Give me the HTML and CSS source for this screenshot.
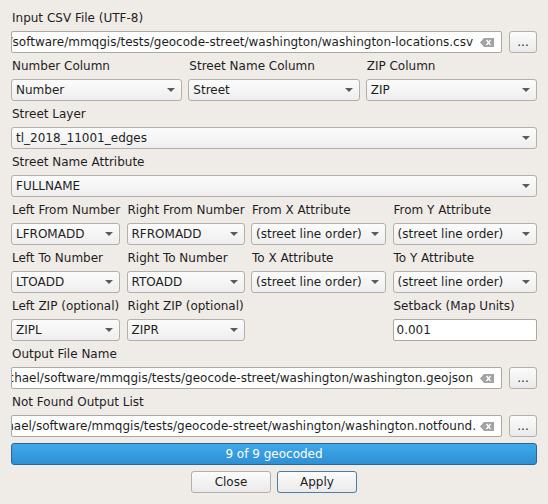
FILE: index.html
```html
<!DOCTYPE html>
<html>
<head>
<meta charset="utf-8">
<link rel="stylesheet" href="styles.css">
</head>
<body>
<div class="dlg">
  <div class="lbl">Input CSV File (UTF-8)</div>
  <div class="filerow">
    <div class="edit file">
      <div class="clip"><span>/home/michael/software/mmqgis/tests/geocode-street/washington/washington-locations.csv</span></div>
      <svg class="clear" width="14" height="9" viewBox="0 0 14 9"><polygon points="0,4.5 4,0 14,0 14,9 4,9" fill="#a3a3a3"/><path d="M6.5 2 L10.5 7 M10.5 2 L6.5 7" stroke="#fff" stroke-width="1.3"/></svg>
    </div>
    <div class="btn dots">...</div>
  </div>

  <div class="grid3">
    <div class="lbl">Number Column</div>
    <div class="lbl">Street Name Column</div>
    <div class="lbl">ZIP Column</div>
    <div class="combo">Number</div>
    <div class="combo">Street</div>
    <div class="combo">ZIP</div>
  </div>

  <div class="lbl">Street Layer</div>
  <div class="combo">tl_2018_11001_edges</div>
  <div class="lbl">Street Name Attribute</div>
  <div class="combo">FULLNAME</div>

  <div class="grid4">
    <div class="lbl">Left From Number</div>
    <div class="lbl">Right From Number</div>
    <div class="lbl">From X Attribute</div>
    <div class="lbl">From Y Attribute</div>
    <div class="combo">LFROMADD</div>
    <div class="combo">RFROMADD</div>
    <div class="combo">(street line order)</div>
    <div class="combo">(street line order)</div>
    <div class="lbl">Left To Number</div>
    <div class="lbl">Right To Number</div>
    <div class="lbl">To X Attribute</div>
    <div class="lbl">To Y Attribute</div>
    <div class="combo">LTOADD</div>
    <div class="combo">RTOADD</div>
    <div class="combo">(street line order)</div>
    <div class="combo">(street line order)</div>
    <div class="lbl">Left ZIP (optional)</div>
    <div class="lbl">Right ZIP (optional)</div>
    <div class="lbl"></div>
    <div class="lbl">Setback (Map Units)</div>
    <div class="combo">ZIPL</div>
    <div class="combo">ZIPR</div>
    <div></div>
    <div class="edit num">0.001</div>
  </div>

  <div class="lbl">Output File Name</div>
  <div class="filerow">
    <div class="edit file">
      <div class="clip"><span>/home/michael/software/mmqgis/tests/geocode-street/washington/washington.geojson</span></div>
      <svg class="clear" width="14" height="9" viewBox="0 0 14 9"><polygon points="0,4.5 4,0 14,0 14,9 4,9" fill="#a3a3a3"/><path d="M6.5 2 L10.5 7 M10.5 2 L6.5 7" stroke="#fff" stroke-width="1.3"/></svg>
    </div>
    <div class="btn dots">...</div>
  </div>

  <div class="lbl">Not Found Output List</div>
  <div class="filerow">
    <div class="edit file">
      <div class="clip tight"><span>/home/michael/software/mmqgis/tests/geocode-street/washington/washington.notfound.</span></div>
      <svg class="clear" width="14" height="9" viewBox="0 0 14 9"><polygon points="0,4.5 4,0 14,0 14,9 4,9" fill="#a3a3a3"/><path d="M6.5 2 L10.5 7 M10.5 2 L6.5 7" stroke="#fff" stroke-width="1.3"/></svg>
    </div>
    <div class="btn dots">...</div>
  </div>

  <div class="progress">9 of 9 geocoded</div>

  <div class="actions">
    <div class="btn act">Close</div>
    <div class="btn act default">Apply</div>
  </div>
</div>
</body>
</html>
```

FILE: styles.css
```css
html, body {
  margin: 0;
  padding: 0;
  background: #efebe7;
}

body {
  font-family: "DejaVu Sans", sans-serif;
  font-size: 12px;
  color: #1e1e1e;
  width: 548px;
  height: 504px;
  overflow: hidden;
}

.dlg {
  padding: 5px 11px 0 11px;
  display: flex;
  flex-direction: column;
}

.lbl {
  height: 26px;
  line-height: 14px;
  display: flex;
  align-items: center;
  padding-left: 1px;
  white-space: nowrap;
}

.combo {
  position: relative;
  height: 22px;
  box-sizing: border-box;
  border: 1px solid #b4afa9;
  border-radius: 3px;
  background: linear-gradient(#fcfcfc, #eeeeee);
  padding: 0 20px 0 4px;
  line-height: 20px;
  white-space: nowrap;
  overflow: hidden;
}

.combo::after {
  content: "";
  position: absolute;
  right: 6px;
  top: 8px;
  width: 0;
  height: 0;
  border-left: 4px solid transparent;
  border-right: 4px solid transparent;
  border-top: 4px solid #5c5c5c;
}

.edit {
  height: 22px;
  box-sizing: border-box;
  border: 1px solid #aca7a1;
  border-radius: 2px;
  background: #fff;
  line-height: 20px;
  white-space: nowrap;
}

.edit.num {
  padding-left: 3px;
}

.filerow {
  display: flex;
  gap: 7px;
  height: 22px;
}

.edit.file {
  flex: 1;
  display: flex;
  align-items: center;
  padding-left: 0;
  min-width: 0;
}

.clip {
  flex: 1;
  min-width: 0;
  overflow: hidden;
  display: flex;
  justify-content: flex-end;
  margin-right: 7px;
}

.clip span {
  flex: none;
  white-space: nowrap;
}

.clip.tight {
  margin-right: 4px;
}

.clear {
  flex: none;
  margin-right: 7px;
}

.btn {
  box-sizing: border-box;
  height: 22px;
  border: 1px solid #b4afa9;
  border-radius: 3px;
  background: linear-gradient(#fbfbfb, #ebeaea);
  text-align: center;
  line-height: 20px;
}

.btn.dots {
  width: 28px;
  flex: none;
}

.grid3 {
  display: grid;
  grid-template-columns: 1fr 1fr 1fr;
  grid-template-rows: 26px 22px;
  column-gap: 6px;
}

.grid4 {
  display: grid;
  grid-template-columns: 109px 118px 135px 1fr;
  grid-template-rows: 26px 22px 26px 22px 26px 22px;
  column-gap: 6.5px;
}

.progress {
  margin-top: 6px;
  height: 22px;
  box-sizing: border-box;
  border: 1px solid #2a6596;
  border-radius: 3px;
  background: linear-gradient(#3fa9ea, #2f8fd5);
  color: #fff;
  text-align: center;
  line-height: 20px;
}

.actions {
  margin-top: 6px;
  display: flex;
  justify-content: center;
  gap: 6px;
}

.btn.act {
  width: 80px;
}

.btn.default {
  border-color: #4a7da8;
}
```
